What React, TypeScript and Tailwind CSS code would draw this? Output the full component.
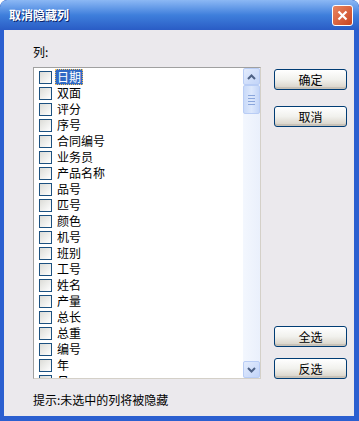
import React from 'react';

const columns = [
  '日期', '双面', '评分', '序号', '合同编号', '业务员', '产品名称', '品号', '匹号', '颜色',
  '机号', '班别', '工号', '姓名', '产量', '总长', '总重', '编号', '年', '月',
];

const font = { fontFamily: '"Noto Sans CJK SC", "Liberation Sans", sans-serif' };

const XpButton: React.FC<{ label: string; className?: string }> = ({ label, className }) => (
  <button
    className={`flex h-[21px] w-[73px] items-center justify-center rounded-[3px] border border-[#003c74] bg-gradient-to-b from-white via-[#f1f1ed] to-[#d6d0c5] text-[12px] leading-none text-black shadow-[inset_0_-2px_0_#c8c2b8] ${className ?? ''}`}
  >
    {label}
  </button>
);

const CheckBox: React.FC = () => (
  <div className="h-[13px] w-[13px] shrink-0 border border-[#1c5180] bg-gradient-to-br from-[#dcdcd7] to-white" />
);

const ScrollArrow: React.FC<{ up?: boolean }> = ({ up }) => (
  <div className="flex h-[17px] w-[17px] items-center justify-center rounded-[2px] border border-[#b9cdf5] bg-gradient-to-br from-[#e3ecfd] to-[#c2d4f8]">
    <svg width="9" height="6" viewBox="0 0 9 6">
      <path
        d={up ? 'M1 5 L4.5 1.5 L8 5' : 'M1 1 L4.5 4.5 L8 1'}
        fill="none"
        stroke="#4d6185"
        strokeWidth="2"
      />
    </svg>
  </div>
);

export default function App() {
  return (
    <div className="flex h-[421px] w-[359px] flex-col overflow-hidden rounded-t-[7px] bg-[#0a3fb5]" style={font}>
      {/* Title bar */}
      <div className="flex h-[30px] shrink-0 items-center justify-between rounded-t-[7px] bg-gradient-to-b from-[#8cb8f4] via-[#3f7fdc] to-[#2a5cc5] pl-[9px] pr-[6px]">
        <span className="text-[12px] font-bold text-white [text-shadow:1px_1px_0_#0a246a]">取消隐藏列</span>
        <div className="flex h-[21px] w-[21px] items-center justify-center rounded-[3px] border border-white bg-gradient-to-br from-[#e8845f] to-[#c9441f]">
          <svg width="11" height="11" viewBox="0 0 11 11">
            <path d="M1.5 1.5 L9.5 9.5 M9.5 1.5 L1.5 9.5" stroke="white" strokeWidth="2.2" />
          </svg>
        </div>
      </div>

      {/* Frame + body */}
      <div className="flex flex-1 bg-gradient-to-r from-[#2b5fd0] to-[#2b5fd0] pb-[5px] pl-[4px] pr-[5px]">
        <div className="flex flex-1 flex-col bg-[#ebe9ed] pl-[29px] pt-[15px] text-[12px] text-black">
          <div className="h-[14px] leading-[14px]">列:</div>

          <div className="mt-[8px] flex">
            {/* Listbox */}
            <div className="flex h-[312px] w-[228px] border border-[#a0a0a0] border-b-[#d4d0c8] border-r-[#d4d0c8] bg-white">
              <div className="flex-1 overflow-hidden pl-[5px] pt-[1px]">
                {columns.map((c, i) => (
                  <div key={c} className="flex h-[16px] items-center gap-[3px]">
                    <CheckBox />
                    <span
                      className={
                        i === 0
                          ? 'border border-dotted border-[#f0c060] bg-[#316ac5] px-[1px] leading-[14px] text-white'
                          : 'px-[2px] leading-[16px]'
                      }
                    >
                      {c}
                    </span>
                  </div>
                ))}
              </div>
              {/* Scrollbar */}
              <div className="flex w-[17px] flex-col justify-between bg-gradient-to-r from-[#f3f7fe] to-[#eaf0fc]">
                <div>
                  <ScrollArrow up />
                  <div className="flex h-[29px] w-[17px] flex-col items-center justify-center gap-[2px] rounded-[2px] border border-[#b9cdf5] bg-gradient-to-r from-[#c9daf9] via-[#dde8fc] to-[#c4d6f8]">
                    <div className="h-px w-[7px] bg-[#8aa6dc]" />
                    <div className="h-px w-[7px] bg-[#8aa6dc]" />
                    <div className="h-px w-[7px] bg-[#8aa6dc]" />
                    <div className="h-px w-[7px] bg-[#8aa6dc]" />
                  </div>
                </div>
                <ScrollArrow />
              </div>
            </div>

            {/* Buttons */}
            <div className="ml-[13px] flex flex-col pt-[2px]">
              <XpButton label="确定" />
              <XpButton label="取消" className="mt-[16px]" />
              <XpButton label="全选" className="mt-[199px]" />
              <XpButton label="反选" className="mt-[11px]" />
            </div>
          </div>

          <div className="mt-[14px] leading-[14px]">提示:未选中的列将被隐藏</div>
        </div>
      </div>
    </div>
  );
}
